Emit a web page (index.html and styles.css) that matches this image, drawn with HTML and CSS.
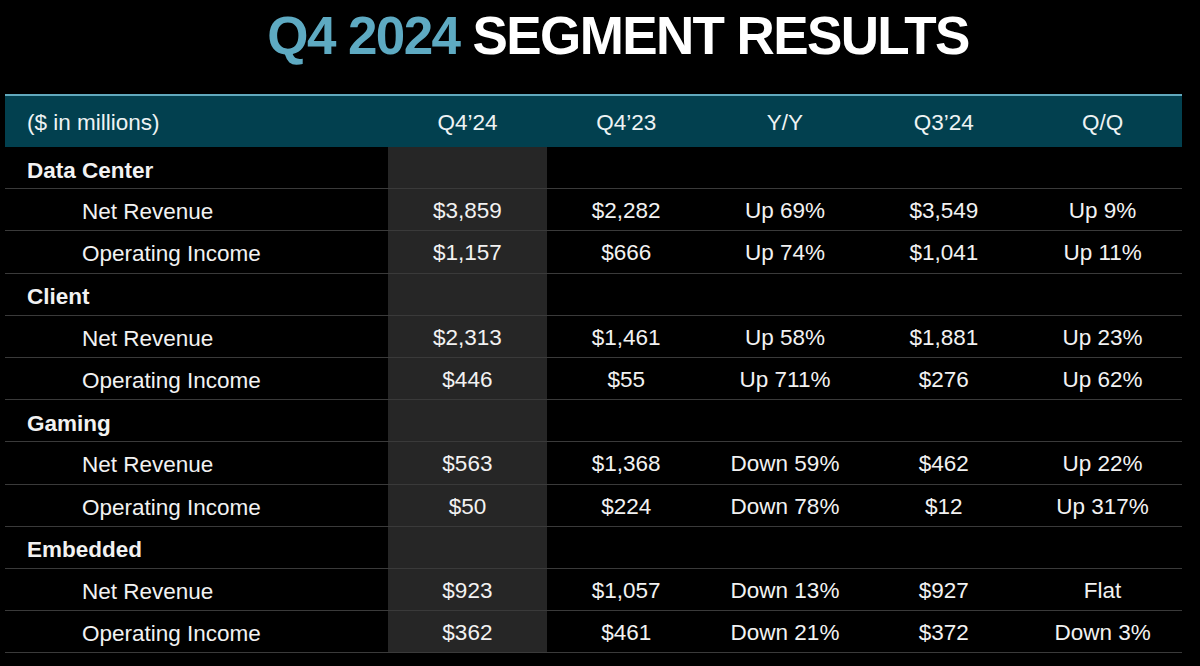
FILE: index.html
```html
<!DOCTYPE html>
<html lang="en">
<head>
<meta charset="utf-8">
<title>Q4 2024 Segment Results</title>
<link rel="stylesheet" href="styles.css">
</head>
<body>
<div class="slide">
  <h1 class="title"><span class="accent">Q4 2024</span> SEGMENT RESULTS</h1>
  <div class="results">
    <div class="row head">
      <div class="cell label">($ in millions)</div>
      <div class="cell">Q4’24</div>
      <div class="cell">Q4’23</div>
      <div class="cell">Y/Y</div>
      <div class="cell">Q3’24</div>
      <div class="cell">Q/Q</div>
    </div>

    <div class="row group">
      <div class="cell label cat">Data Center</div>
      <div class="cell hl"></div><div class="cell"></div><div class="cell"></div><div class="cell"></div><div class="cell"></div>
    </div>
    <div class="row">
      <div class="cell label sub">Net Revenue</div>
      <div class="cell hl">$3,859</div><div class="cell">$2,282</div><div class="cell">Up 69%</div><div class="cell">$3,549</div><div class="cell">Up 9%</div>
    </div>
    <div class="row">
      <div class="cell label sub">Operating Income</div>
      <div class="cell hl">$1,157</div><div class="cell">$666</div><div class="cell">Up 74%</div><div class="cell">$1,041</div><div class="cell">Up 11%</div>
    </div>

    <div class="row group">
      <div class="cell label cat">Client</div>
      <div class="cell hl"></div><div class="cell"></div><div class="cell"></div><div class="cell"></div><div class="cell"></div>
    </div>
    <div class="row">
      <div class="cell label sub">Net Revenue</div>
      <div class="cell hl">$2,313</div><div class="cell">$1,461</div><div class="cell">Up 58%</div><div class="cell">$1,881</div><div class="cell">Up 23%</div>
    </div>
    <div class="row">
      <div class="cell label sub">Operating Income</div>
      <div class="cell hl">$446</div><div class="cell">$55</div><div class="cell">Up 711%</div><div class="cell">$276</div><div class="cell">Up 62%</div>
    </div>

    <div class="row group">
      <div class="cell label cat">Gaming</div>
      <div class="cell hl"></div><div class="cell"></div><div class="cell"></div><div class="cell"></div><div class="cell"></div>
    </div>
    <div class="row">
      <div class="cell label sub">Net Revenue</div>
      <div class="cell hl">$563</div><div class="cell">$1,368</div><div class="cell">Down 59%</div><div class="cell">$462</div><div class="cell">Up 22%</div>
    </div>
    <div class="row">
      <div class="cell label sub">Operating Income</div>
      <div class="cell hl">$50</div><div class="cell">$224</div><div class="cell">Down 78%</div><div class="cell">$12</div><div class="cell">Up 317%</div>
    </div>

    <div class="row group">
      <div class="cell label cat">Embedded</div>
      <div class="cell hl"></div><div class="cell"></div><div class="cell"></div><div class="cell"></div><div class="cell"></div>
    </div>
    <div class="row">
      <div class="cell label sub">Net Revenue</div>
      <div class="cell hl">$923</div><div class="cell">$1,057</div><div class="cell">Down 13%</div><div class="cell">$927</div><div class="cell">Flat</div>
    </div>
    <div class="row">
      <div class="cell label sub">Operating Income</div>
      <div class="cell hl">$362</div><div class="cell">$461</div><div class="cell">Down 21%</div><div class="cell">$372</div><div class="cell">Down 3%</div>
    </div>
  </div>
</div>
</body>
</html>
```
FILE: styles.css
```css
* { box-sizing: border-box; }

html, body {
  margin: 0;
  padding: 0;
  background: #000;
}

body {
  font-family: "Liberation Sans", Arial, Helvetica, sans-serif;
  color: #f2f2f2;
  width: 1200px;
  height: 666px;
  overflow: hidden;
}

.slide {
  width: 1200px;
  height: 666px;
  background: #000;
}

.title {
  margin: 0;
  padding: 9px 0 0 36px;
  height: 62px;
  font-size: 53px;
  line-height: 53px;
  font-weight: 700;
  letter-spacing: -1.6px;
  text-align: center;
  color: #ffffff;
  white-space: nowrap;
}

.accent {
  color: #5eaac2;
}

.results {
  margin: 32px 0 0 5px;
  width: 1177px;
}

.row {
  display: grid;
  grid-template-columns: 383px repeat(5, 1fr);
  height: 42.2px;
  border-bottom: 1px solid #3a3a3a;
}

.row.head {
  height: 53px;
  border-top: 2px solid #62a9bd;
  border-bottom: none;
  background: #02404f;
  color: #eef3f4;
}

.cell {
  display: flex;
  align-items: center;
  justify-content: center;
  font-size: 22.5px;
  padding-top: 3px;
  white-space: nowrap;
}

.row.head .cell {
  padding-top: 2px;
}

.cell.label {
  justify-content: flex-start;
  padding-left: 22px;
}

.cell.cat {
  font-weight: 700;
  padding-top: 6px;
}

.cell.sub {
  padding-left: 77px;
  padding-top: 5px;
}

.cell.hl {
  background: #262626;
}
```
